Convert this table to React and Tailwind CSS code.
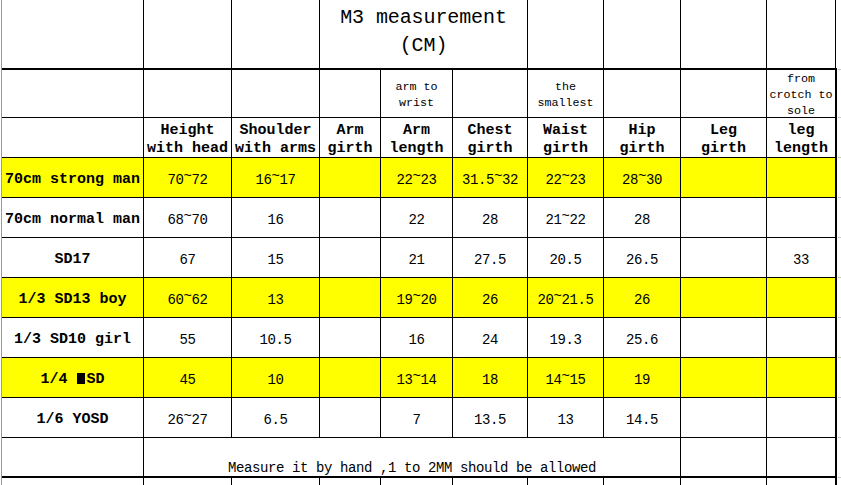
import React from "react";

function Tx({ s }) {
  const parts = s.split("~");
  return (
    <>
      {parts.map((p, i) => (
        <React.Fragment key={i}>
          {i > 0 && <span className="relative -top-[4px]">~</span>}
          {p}
        </React.Fragment>
      ))}
    </>
  );
}

function Cell({ children, yellow, className = "" }) {
  return (
    <div
      className={`flex items-center justify-center text-center text-black ${
        yellow ? "bg-[#ffff00]" : "bg-white"
      } ${className}`}
    >
      {children}
    </div>
  );
}

const rows = [
  { label: "70cm strong man", y: true, v: ["70~72", "16~17", "", "22~23", "31.5~32", "22~23", "28~30", "", ""] },
  { label: "70cm normal man", y: false, v: ["68~70", "16", "", "22", "28", "21~22", "28", "", ""] },
  { label: "SD17", y: false, v: ["67", "15", "", "21", "27.5", "20.5", "26.5", "", "33"] },
  { label: "1/3 SD13 boy", y: true, v: ["60~62", "13", "", "19~20", "26", "20~21.5", "26", "", ""] },
  { label: "1/3 SD10 girl", y: false, v: ["55", "10.5", "", "16", "24", "19.3", "25.6", "", ""] },
  { label: "MSD", y: true, v: ["45", "10", "", "13~14", "18", "14~15", "19", "", ""] },
  { label: "1/6 YOSD", y: false, v: ["26~27", "6.5", "", "7", "13.5", "13", "14.5", "", ""] },
];

const headers = [
  ["Height", "with head"],
  ["Shoulder", "with arms"],
  ["Arm", "girth"],
  ["Arm", "length"],
  ["Chest", "girth"],
  ["Waist", "girth"],
  ["Hip", "girth"],
  ["Leg", "girth"],
  ["leg", "length"],
];

const mono = "font-['Liberation_Mono',monospace]";

export default function App() {
  return (
    <div className={`w-[841px] h-[485px] overflow-hidden bg-white flex ${mono}`}>
      <div className="ml-px border-l border-[#9c9c9c] flex">
        <div className="grid grid-cols-[141px_87px_87px_60px_71px_74px_75px_76px_85px_68px_1px] grid-rows-[69px_47px_39px_39px_39px_39px_39px_39px_39px_39px_39px_20px] gap-px bg-black">
          {/* Row 0: title */}
          <Cell className="border-b border-black" />
          <Cell className="border-b border-black" />
          <Cell className="border-b border-black" />
          <Cell className="col-span-3 border-b border-black pb-[5px]">
            <div className="text-[20px] leading-[28px] whitespace-nowrap tracking-[-0.1px]">
              M3 measurement
              <br />
              (CM)
            </div>
          </Cell>
          <Cell className="border-b border-black" />
          <Cell className="border-b border-black" />
          <Cell className="border-b border-black" />
          <Cell className="border-b border-black" />
          <div className="bg-white border-b border-black" />

          {/* Row 1: notes */}
          {[
            "",
            "",
            "",
            "",
            ["arm to", "wrist"],
            "",
            ["the", "smallest"],
            "",
            "",
            ["from", "crotch to", "sole"],
          ].map((n, i) => (
            <Cell key={i} className="pt-[3px]">
              {n && (
                <div className="text-[11.7px] leading-[16px] whitespace-nowrap">
                  {n.map((l, j) => (
                    <div key={j}>{l}</div>
                  ))}
                </div>
              )}
            </Cell>
          ))}
          <div className="bg-black" />

          {/* Row 2: headers */}
          <Cell />
          {headers.map((h, i) => (
            <Cell key={i} className="pt-[4px]">
              <div className="text-[15px] font-bold leading-[18px] whitespace-nowrap">
                <div>{h[0]}</div>
                <div>{h[1]}</div>
              </div>
            </Cell>
          ))}
          <div className="bg-black" />

          {/* Data rows */}
          {rows.map((r, ri) => (
            <React.Fragment key={ri}>
              <Cell yellow={r.y} className="pt-[4px]">
                <span className="text-[15px] font-bold leading-[18px] whitespace-nowrap">
                  {r.label === "MSD" ? (
                    <>
                      1/4{" "}
                      <span className="inline-block w-[8px] h-[11px] bg-black align-[-1px] mr-[2px]" />
                      SD
                    </>
                  ) : (
                    r.label
                  )}
                </span>
              </Cell>
              {r.v.map((v, vi) => (
                <Cell key={vi} yellow={r.y} className="pt-[4px]">
                  <span className="text-[14px] tracking-[-0.4px] leading-[16px] whitespace-nowrap">
                    <Tx s={v} />
                  </span>
                </Cell>
              ))}
              <div className="bg-black" />
            </React.Fragment>
          ))}

          {/* Row 10: note */}
          <Cell className="border-b border-black" />
          <div className="col-span-7 flex items-end justify-center bg-white border-b border-black">
            <span className="text-[14px] tracking-[-0.4px] leading-[16px] whitespace-nowrap">
              Measure it by hand ,1 to 2MM should be allowed
            </span>
          </div>
          <Cell className="border-b border-black" />
          <Cell className="border-b border-black" />
          <div className="bg-black" />

          {/* Row 11: trailing */}
          {Array.from({ length: 10 }).map((_, i) => (
            <Cell key={i} />
          ))}
          <div className="bg-black" />
        </div>
        <div className="ml-px w-[4px] grid grid-rows-[69px_47px_39px_39px_39px_39px_39px_39px_39px_39px_39px_20px] gap-px bg-[#c8c8c8]">
          {Array.from({ length: 12 }).map((_, i) => (
            <div key={i} className="bg-white" />
          ))}
        </div>
      </div>
    </div>
  );
}
